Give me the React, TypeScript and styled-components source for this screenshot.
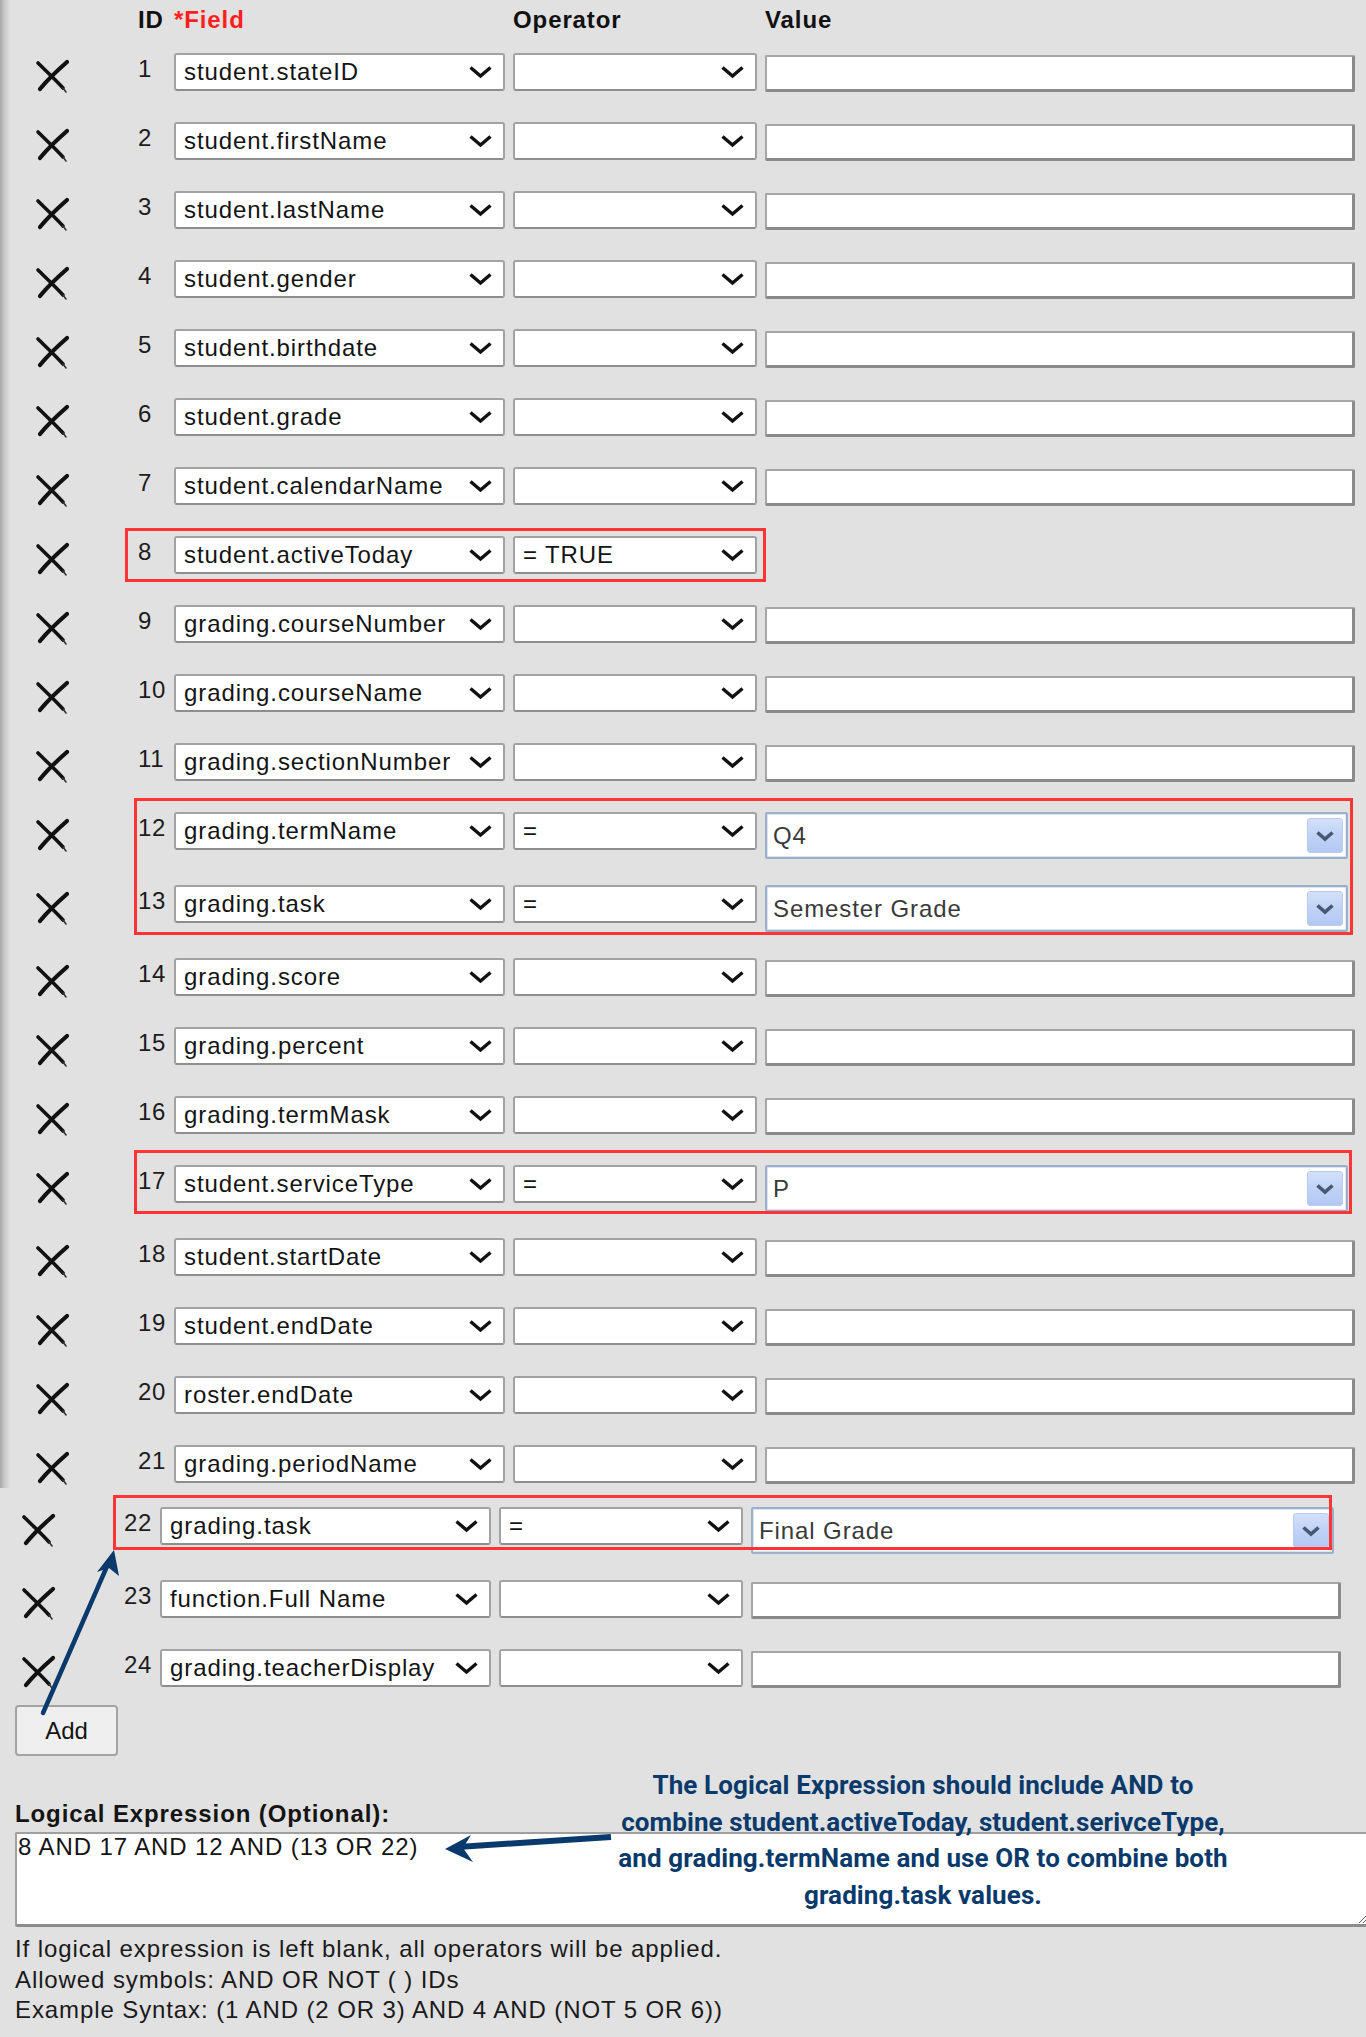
import React from "react";
import styled, { createGlobalStyle, css } from "styled-components";

const GlobalStyle = createGlobalStyle`
  html, body { margin: 0; padding: 0; background: #e1e1e1; }
  body { font-family: "Liberation Sans", Arial, sans-serif; overflow: hidden; }
  * { box-sizing: border-box; }
`;

const Page = styled.div`
  width: 1366px;
  height: 2037px;
  overflow: hidden;
  background: #e1e1e1;
  color: #141414;
  font-family: "Liberation Sans", Arial, sans-serif;
  font-size: 24px;
  letter-spacing: 0.9px;
`;

const UpperSection = styled.section`
  height: 1488px;
  overflow: hidden;
  padding-left: 14px;
  background: linear-gradient(to right, #a6a6a6 0, #c6c6c6 4px, #dcdcdc 9px, #e1e1e1 12px);
`;

const LowerSection = styled.section`
  position: relative;
  height: 549px;
  padding-top: 4px;
`;

const gridCols = css`
  display: grid;
  grid-template-columns: 116px 28px 331px 244px 590px;
  column-gap: 8px;
`;

const HeaderRow = styled.div`
  ${gridCols}
  height: 38px;
  align-items: center;
  font-weight: 700;
  padding-top: 2px;
`;

const HeadCell = styled.div<{ $red?: boolean }>`
  color: ${(p) => (p.$red ? "#ff1e1e" : "#111")};
  white-space: nowrap;
`;

const Row = styled.div`
  ${gridCols}
  align-items: start;
  min-height: 69px;
  padding: 15px 0 11px;
`;

const DeleteCell = styled.div`
  padding-left: 21px;
  margin-top: 6px;
  line-height: 0;
`;

const IdCell = styled.div`
  font-size: 24px;
  line-height: 26px;
  margin-top: 3px;
  color: #1c1c1c;
  letter-spacing: 0.6px;
  white-space: nowrap;
`;

const SelectBox = styled.div`
  height: 38px;
  background: #fff;
  border: 2px solid #a2a2a2;
  border-bottom-color: #8e8e8e;
  border-radius: 3px;
  display: flex;
  align-items: center;
  padding-left: 8px;
  overflow: hidden;
`;

const SelectText = styled.span`
  flex: 1;
  min-width: 0;
  white-space: nowrap;
  overflow: hidden;
  color: #141414;
`;

const Chevron = styled.svg`
  flex: none;
  margin: 0 10px 0 6px;
`;

const TextBox = styled.input`
  display: block;
  width: 590px;
  height: 37px;
  margin-top: 2px;
  background: #fff;
  border: 2px solid #a6a6a6;
  border-right: 3px solid #8a8a8a;
  border-bottom: 3px solid #8a8a8a;
  border-radius: 2px;
  outline: none;
  padding: 0 8px;
  font: inherit;
`;

const Combo = styled.div`
  width: 583px;
  height: 47px;
  background: #fff;
  border: 2px solid #9db0ca;
  box-shadow: inset 0 0 0 1px #dbe3ee;
  border-radius: 2px;
  display: flex;
  align-items: center;
  padding: 0 3px 0 6px;
`;

const ComboText = styled.span`
  flex: 1;
  color: #3a3a3a;
  white-space: nowrap;
`;

const ComboButton = styled.div`
  width: 36px;
  height: 35px;
  border-radius: 3px;
  background: linear-gradient(to bottom, #d3e0fb 0%, #c0d2f6 50%, #b3c8f2 100%);
  border: 1px solid #b9cbee;
  display: flex;
  align-items: center;
  justify-content: center;
`;

const Group = styled.div`
  position: relative;
`;

const Highlight = styled.div<{ $t: number; $l: number; $w: number; $h: number }>`
  position: absolute;
  top: ${(p) => p.$t}px;
  left: ${(p) => p.$l}px;
  width: ${(p) => p.$w}px;
  height: ${(p) => p.$h}px;
  border: 3px solid #ff3535;
  pointer-events: none;
`;

const AddButton = styled.button`
  display: block;
  margin: 2px 0 0 15px;
  width: 103px;
  height: 51px;
  background: #efefef;
  border: 2px solid #a3a3a3;
  border-radius: 4px;
  font: inherit;
  color: #141414;
  padding: 0;
`;

const ExprLabel = styled.div`
  margin: 44px 0 0 15px;
  font-weight: 700;
  line-height: 28px;
  white-space: nowrap;
`;

const ExprInput = styled.textarea`
  display: block;
  margin: 4px 0 0 15px;
  width: 1354px;
  height: 95px;
  background: #fff;
  border: 2px solid #a0a0a0;
  border-bottom: 3px solid #8c8c8c;
  border-radius: 2px;
  padding: 0 1px;
  font: inherit;
  letter-spacing: 0.9px;
  line-height: 26px;
  color: #141414;
  outline: none;
  resize: both;
`;

const HelpText = styled.div`
  margin: 7px 0 0 15px;
  line-height: 30.5px;
  color: #1a1a1a;
  white-space: nowrap;
`;

const Annotation = styled.div`
  position: absolute;
  top: 279px;
  left: 593px;
  width: 660px;
  text-align: center;
  font-family: Roboto, "Liberation Sans", sans-serif;
  font-weight: 700;
  font-size: 26px;
  line-height: 36.5px;
  letter-spacing: 0.1px;
  color: #0a3a6b;
  white-space: nowrap;
`;

const ArrowLayer = styled.svg`
  position: absolute;
  top: 0;
  left: 0;
  pointer-events: none;
`;

type RowData = {
  id: number;
  field: string;
  op?: string;
  combo?: string;
  noValue?: boolean;
};

const DeleteIcon = () => (
  <svg width="36" height="36" viewBox="0 0 36 36">
    <path d="M3 4 C 10 11, 19 19, 28 29" stroke="#111" strokeWidth="3.6" strokeLinecap="round" fill="none" />
    <path d="M32 3 C 24 10, 14 19, 5 30" stroke="#111" strokeWidth="4.2" strokeLinecap="round" fill="none" />
    <path d="M28 29 L 31 33" stroke="#333" strokeWidth="1.6" strokeLinecap="round" fill="none" />
  </svg>
);

const SelectChevron = () => (
  <Chevron width="25" height="14" viewBox="0 0 25 14">
    <polyline points="2.5,2.5 12.5,11 22.5,2.5" stroke="#111" strokeWidth="3.4" fill="none" strokeLinejoin="miter" />
  </Chevron>
);

const Select = ({ text }: { text: string }) => (
  <SelectBox>
    <SelectText>{text}</SelectText>
    <SelectChevron />
  </SelectBox>
);

const ComboBox = ({ text }: { text: string }) => (
  <Combo>
    <ComboText>{text}</ComboText>
    <ComboButton>
      <svg width="20" height="12" viewBox="0 0 20 12">
        <polyline points="2.5,2.5 10,9 17.5,2.5" stroke="#465872" strokeWidth="3.6" fill="none" />
      </svg>
    </ComboButton>
  </Combo>
);

const FilterRow = ({ r }: { r: RowData }) => (
  <Row>
    <DeleteCell>
      <DeleteIcon />
    </DeleteCell>
    <IdCell>{r.id}</IdCell>
    <Select text={r.field} />
    <Select text={r.op ?? ""} />
    {r.noValue ? <div /> : r.combo !== undefined ? <ComboBox text={r.combo} /> : <TextBox readOnly value="" />}
  </Row>
);

const upper: RowData[] = [
  { id: 1, field: "student.stateID" },
  { id: 2, field: "student.firstName" },
  { id: 3, field: "student.lastName" },
  { id: 4, field: "student.gender" },
  { id: 5, field: "student.birthdate" },
  { id: 6, field: "student.grade" },
  { id: 7, field: "student.calendarName" },
  { id: 8, field: "student.activeToday", op: "= TRUE", noValue: true },
  { id: 9, field: "grading.courseNumber" },
  { id: 10, field: "grading.courseName" },
  { id: 11, field: "grading.sectionNumber" },
  { id: 12, field: "grading.termName", op: "=", combo: "Q4" },
  { id: 13, field: "grading.task", op: "=", combo: "Semester Grade" },
  { id: 14, field: "grading.score" },
  { id: 15, field: "grading.percent" },
  { id: 16, field: "grading.termMask" },
  { id: 17, field: "student.serviceType", op: "=", combo: "P" },
  { id: 18, field: "student.startDate" },
  { id: 19, field: "student.endDate" },
  { id: 20, field: "roster.endDate" },
  { id: 21, field: "grading.periodName" },
];

const lower: RowData[] = [
  { id: 22, field: "grading.task", op: "=", combo: "Final Grade" },
  { id: 23, field: "function.Full Name" },
  { id: 24, field: "grading.teacherDisplay" },
];

const byId = (id: number) => upper.find((r) => r.id === id)!;
const range = (a: number, b: number) => upper.filter((r) => r.id >= a && r.id <= b);

export default function App() {
  return (
    <Page>
      <GlobalStyle />
      <UpperSection>
        <HeaderRow>
          <span />
          <HeadCell>ID</HeadCell>
          <HeadCell $red>*Field</HeadCell>
          <HeadCell>Operator</HeadCell>
          <HeadCell>Value</HeadCell>
        </HeaderRow>
        {range(1, 7).map((r) => (
          <FilterRow key={r.id} r={r} />
        ))}
        <Group>
          <FilterRow r={byId(8)} />
          <Highlight $t={7} $l={111} $w={641} $h={54} />
        </Group>
        {range(9, 11).map((r) => (
          <FilterRow key={r.id} r={r} />
        ))}
        <Group>
          <FilterRow r={byId(12)} />
          <FilterRow r={byId(13)} />
          <Highlight $t={1} $l={120} $w={1219} $h={137} />
        </Group>
        {range(14, 16).map((r) => (
          <FilterRow key={r.id} r={r} />
        ))}
        <Group>
          <FilterRow r={byId(17)} />
          <Highlight $t={0} $l={120} $w={1218} $h={64} />
        </Group>
        {range(18, 21).map((r) => (
          <FilterRow key={r.id} r={r} />
        ))}
      </UpperSection>
      <LowerSection>
        <Group>
          <FilterRow r={lower[0]} />
          <Highlight $t={3} $l={113} $w={1219} $h={55} />
        </Group>
        <FilterRow r={lower[1]} />
        <FilterRow r={lower[2]} />
        <AddButton>Add</AddButton>
        <ExprLabel>Logical Expression (Optional):</ExprLabel>
        <ExprInput readOnly value="8 AND 17 AND 12 AND (13 OR 22)" />
        <HelpText>
          If logical expression is left blank, all operators will be applied.
          <br />
          Allowed symbols: AND OR NOT ( ) IDs
          <br />
          Example Syntax: (1 AND (2 OR 3) AND 4 AND (NOT 5 OR 6))
        </HelpText>
        <Annotation>
          The Logical Expression should include AND to
          <br />
          combine student.activeToday, student.serivceType,
          <br />
          and grading.termName and use OR to combine both
          <br />
          grading.task values.
        </Annotation>
        <ArrowLayer width="1366" height="549" viewBox="0 0 1366 549">
          <line x1="43" y1="225" x2="108" y2="76" stroke="#0a3a6b" strokeWidth="4.5" strokeLinecap="round" />
          <polygon points="114,62 119,88 109,80 97,84" fill="#0a3a6b" />
          <line x1="611" y1="349" x2="458" y2="359" stroke="#0a3a6b" strokeWidth="6" strokeLinecap="butt" />
          <polygon points="445,361 471,347 463,360 473,374" fill="#0a3a6b" />
        </ArrowLayer>
      </LowerSection>
    </Page>
  );
}
